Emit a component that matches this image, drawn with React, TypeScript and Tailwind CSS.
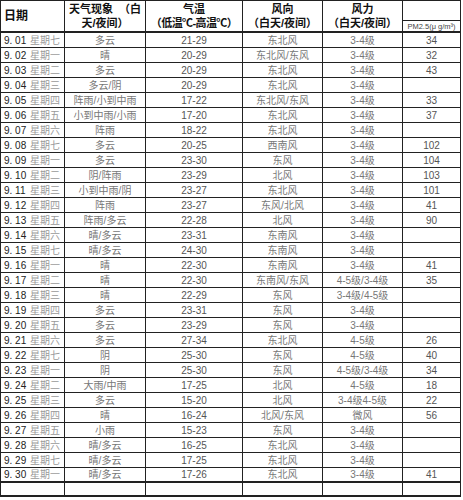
import React from "react";

type Row = [string, string, string, string, string, string, string];

const rows: Row[] = [
  ["9. 01", "星期七", "多云", "21-29", "东北风", "3-4级", "34"],
  ["9. 02", "星期一", "晴", "20-29", "东北风/东风", "3-4级", "32"],
  ["9. 03", "星期二", "多云", "20-29", "东北风", "3-4级", "43"],
  ["9. 04", "星期三", "多云/阴", "20-29", "东北风", "3-4级", ""],
  ["9. 05", "星期四", "阵雨/小到中雨", "17-22", "东北风/东风", "3-4级", "33"],
  ["9. 06", "星期五", "小到中雨/小雨", "17-20", "东北风", "3-4级", "37"],
  ["9. 07", "星期六", "阵雨", "18-22", "东北风", "3-4级", ""],
  ["9. 08", "星期七", "多云", "20-25", "西南风", "3-4级", "102"],
  ["9. 09", "星期一", "多云", "23-30", "东风", "3-4级", "104"],
  ["9. 10", "星期二", "阴/阵雨", "23-29", "北风", "3-4级", "103"],
  ["9. 11", "星期三", "小到中雨/阴", "23-27", "东北风", "3-4级", "101"],
  ["9. 12", "星期四", "阵雨", "23-27", "东风/北风", "3-4级", "41"],
  ["9. 13", "星期五", "阵雨/多云", "22-28", "北风", "3-4级", "90"],
  ["9. 14", "星期六", "晴/多云", "23-31", "东南风", "3-4级", ""],
  ["9. 15", "星期七", "晴/多云", "24-30", "东南风", "3-4级", ""],
  ["9. 16", "星期一", "晴", "22-30", "东南风", "3-4级", "41"],
  ["9. 17", "星期二", "晴", "22-30", "东南风/东风", "4-5级/3-4级", "35"],
  ["9. 18", "星期三", "晴", "22-29", "东风", "3-4级/4-5级", ""],
  ["9. 19", "星期四", "多云", "23-31", "东风", "3-4级", ""],
  ["9. 20", "星期五", "多云", "23-29", "东风", "3-4级", ""],
  ["9. 21", "星期六", "多云", "27-34", "东北风", "4-5级", "26"],
  ["9. 22", "星期七", "阴", "25-30", "东风", "4-5级", "40"],
  ["9. 23", "星期一", "阴", "25-30", "东风", "4-5级/3-4级", "34"],
  ["9. 24", "星期二", "大雨/中雨", "17-25", "北风", "4-5级", "18"],
  ["9. 25", "星期三", "多云", "15-20", "北风", "3-4级4-5级", "22"],
  ["9. 26", "星期四", "晴", "16-24", "北风/东风", "微风", "56"],
  ["9. 27", "星期五", "小雨", "15-23", "东风", "3-4级", ""],
  ["9. 28", "星期六", "晴/多云", "16-25", "东北风", "3-4级", ""],
  ["9. 29", "星期七", "晴/多云", "17-25", "东北风", "3-4级", ""],
  ["9. 30", "星期一", "晴/多云", "17-26", "东北风", "3-4级", "41"],
];

const FONT = { fontFamily: '"Liberation Sans", "Noto Sans CJK SC", sans-serif' };

export default function App() {
  return (
    <div className="w-[463px] h-[500px] bg-white overflow-hidden" style={FONT}>
      <div className="w-[461px] border-l border-[#222]">
        {/* header */}
        <div className="flex h-[33px] border-t border-b-2 border-[#222] text-[11px] font-bold text-[#111] leading-[14px]">
          <div className="w-[64px] shrink-0 border-r border-[#222] flex items-center pl-[3px] text-[12px]">日期</div>
          <div className="w-[81px] shrink-0 border-r border-[#222] flex flex-col justify-center px-[4px]">
            <div className="flex justify-between"><span>天气现象</span><span>（白</span></div>
            <div className="text-center">天/夜间）</div>
          </div>
          <div className="w-[97px] shrink-0 border-r border-[#222] flex flex-col items-center justify-center">
            <div>气温</div>
            <div className="tracking-[-0.6px] whitespace-nowrap">（低温℃-高温℃）</div>
          </div>
          <div className="w-[80px] shrink-0 border-r border-[#222] flex flex-col items-center justify-center">
            <div>风向</div>
            <div>（白天/夜间）</div>
          </div>
          <div className="w-[80px] shrink-0 border-r border-[#222] flex flex-col items-center justify-center">
            <div>风力</div>
            <div>（白天/夜间）</div>
          </div>
          <div className="w-[58px] shrink-0 border-r border-[#222] flex flex-col">
            <div className="h-[20px] border-b border-[#222]" />
            <div className="flex-1 flex items-center justify-center text-[7.5px] leading-[9px] font-normal text-[#444] whitespace-nowrap">
              PM2.5(μ g/m³)
            </div>
          </div>
        </div>
        {/* body */}
        {rows.map((r, i) => (
          <div
            key={i}
            className={`flex h-[15px] border-[#222] ${i === rows.length - 1 ? "border-b-2" : "border-b"}`}
          >
            <div className="w-[64px] shrink-0 border-r border-[#222] flex items-center pl-[3px] whitespace-nowrap">
              <span className="w-[26px] text-[10px] text-[#222]">{r[0]}</span>
              <span className="text-[10px] text-[#9a9a9a]">{r[1]}</span>
            </div>
            <div className="w-[81px] shrink-0 border-r border-[#222] flex items-center justify-center text-[10px] text-[#777] whitespace-nowrap">
              {r[2]}
            </div>
            <div className="w-[97px] shrink-0 border-r border-[#222] flex items-center justify-center text-[10px] text-[#555]">
              {r[3]}
            </div>
            <div className="w-[80px] shrink-0 border-r border-[#222] flex items-center justify-center text-[10px] text-[#777] whitespace-nowrap">
              {r[4]}
            </div>
            <div className="w-[80px] shrink-0 border-r border-[#222] flex items-center justify-center text-[10px] text-[#777] whitespace-nowrap">
              {r[5]}
            </div>
            <div className="w-[58px] shrink-0 border-r border-[#222] flex items-center justify-center text-[10px] text-[#555]">
              {r[6]}
            </div>
          </div>
        ))}
        {/* empty row */}
        <div className="flex h-[14px] border-b-2 border-[#222]">
          <div className="w-[64px] shrink-0 border-r border-[#222]" />
          <div className="w-[81px] shrink-0 border-r border-[#222]" />
          <div className="w-[97px] shrink-0 border-r border-[#222]" />
          <div className="w-[80px] shrink-0 border-r border-[#222]" />
          <div className="w-[80px] shrink-0 border-r border-[#222]" />
          <div className="w-[58px] shrink-0 border-r border-[#222]" />
        </div>
      </div>
    </div>
  );
}
